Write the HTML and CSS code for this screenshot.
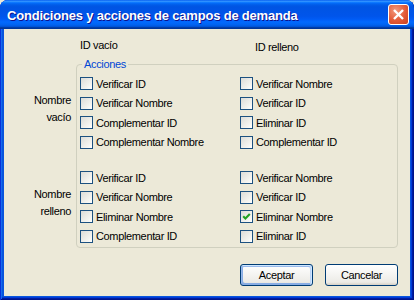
FILE: index.html
```html
<!DOCTYPE html>
<html lang="es">
<head>
    <meta charset="UTF-8">
    <meta name="viewport" content="width=device-width, initial-scale=1.0">
    <title>Condiciones y acciones de campos de demanda</title>
    <link rel="stylesheet" href="styles.css">
</head>
<body>
    <div class="window">
        <div class="titlebar">
            <span class="title">Condiciones y acciones de campos de demanda</span>
            <button class="close" aria-label="Cerrar">
                <svg width="19" height="19" viewBox="0 0 19 19">
                    <path d="M5 5 L14 14 M14 5 L5 14" stroke="#fff" stroke-width="2.4" fill="none"/>
                </svg>
            </button>
        </div>

        <div class="content">
            <div class="heads">
                <span class="head">ID vacío</span>
                <span class="head head-right">ID relleno</span>
            </div>

            <div class="matrix">
                <div class="side">
                    <div class="side-label"><span>Nombre<br>vacío</span></div>
                    <div class="side-label"><span>Nombre<br>relleno</span></div>
                </div>

                <fieldset class="actions">
                    <legend>Acciones</legend>

                    <!-- Nombre vacío -->
                    <div class="group">
                        <label class="check"><span class="box"></span>Verificar ID</label>
                        <label class="check"><span class="box"></span>Verificar Nombre</label>
                        <label class="check"><span class="box"></span>Verificar Nombre</label>
                        <label class="check"><span class="box"></span>Verificar ID</label>
                        <label class="check"><span class="box"></span>Complementar ID</label>
                        <label class="check"><span class="box"></span>Eliminar ID</label>
                        <label class="check"><span class="box"></span>Complementar Nombre</label>
                        <label class="check"><span class="box"></span>Complementar ID</label>
                    </div>

                    <!-- Nombre relleno -->
                    <div class="group">
                        <label class="check"><span class="box"></span>Verificar ID</label>
                        <label class="check"><span class="box"></span>Verificar Nombre</label>
                        <label class="check"><span class="box"></span>Verificar Nombre</label>
                        <label class="check"><span class="box"></span>Verificar ID</label>
                        <label class="check"><span class="box"></span>Eliminar Nombre</label>
                        <label class="check"><span class="box checked">
                            <svg width="11" height="11" viewBox="0 0 11 11">
                                <path d="M2.2 5.2 L4.4 7.4 L8.8 3" stroke="#21A121" stroke-width="2.1" fill="none"/>
                            </svg>
                        </span>Eliminar Nombre</label>
                        <label class="check"><span class="box"></span>Complementar ID</label>
                        <label class="check"><span class="box"></span>Eliminar ID</label>
                    </div>
                </fieldset>
            </div>

            <div class="buttons">
                <button class="btn btn-default">Aceptar</button>
                <button class="btn">Cancelar</button>
            </div>
        </div>
    </div>
</body>
</html>
```

FILE: styles.css
```css
html, body {
    margin: 0;
    padding: 0;
}

body {
    font-family: "Liberation Sans", Arial, sans-serif;
    font-size: 11px;
    color: #000;
    background-color: #ECE9D8;
}

.window {
    width: 414px;
    height: 300px;
    display: flex;
    flex-direction: column;
    background-color: #0855DD;
    border-radius: 8px 8px 0 0;
    box-shadow:
        inset 1px 0 0 #0831D9,
        inset -1px -1px 0 #00138C,
        inset 2px 0 0 #166AEE,
        inset -2px -2px 0 #001EA0,
        inset -3px -3px 0 #003BDA;
}

/* title bar */
.titlebar {
    height: 29px;
    flex: none;
    display: flex;
    align-items: center;
    justify-content: space-between;
    padding: 0 5px 0 7px;
    box-sizing: border-box;
    border-radius: 8px 8px 0 0;
    background: linear-gradient(180deg,
        #0058EE 0%, #3593FF 4%, #288EFF 6%, #127DFF 8%, #036FFC 10%,
        #0262EE 14%, #0057E5 20%, #0054E3 24%, #0055EB 56%, #005BF5 66%,
        #026AFE 76%, #0062EF 86%, #0052D6 92%, #0040AB 94%, #003092 100%);
}

.title {
    color: #fff;
    font-weight: bold;
    font-size: 13px;
    letter-spacing: -0.2px;
    text-shadow: 1px 1px #0F1089;
    margin-top: 1px;
}

.close {
    width: 21px;
    height: 21px;
    padding: 0;
    border: 1px solid #fff;
    border-radius: 3px;
    display: flex;
    align-items: center;
    justify-content: center;
    background: radial-gradient(circle at 35% 30%, #F29A7E 0%, #E35A37 55%, #C9411F 100%);
}

/* dialog body */
.content {
    flex: 1;
    margin: 0 4px 4px;
    padding: 10px 12px 0 0;
    background-color: #ECE9D8;
    letter-spacing: -0.35px;
}

.heads {
    display: flex;
    align-items: flex-start;
    padding-left: 76px;
    line-height: 13px;
}

.head {
    width: 175px;
    flex: none;
}

.head-right {
    width: auto;
    padding-top: 2px;
}

.matrix {
    display: flex;
    margin-top: 3px;
}

.side {
    width: 72px;
    flex: none;
    box-sizing: border-box;
    padding: 17px 5px 0 0;
    display: flex;
    flex-direction: column;
    gap: 16px;
    text-align: right;
    line-height: 17px;
}

.side-label {
    height: 78px;
    box-sizing: border-box;
    padding-bottom: 9px;
    display: flex;
    flex-direction: column;
    justify-content: center;
}

.actions {
    flex: 1;
    min-width: 0;
    margin: 0;
    padding: 3px 3px 1px;
    border: 1px solid #D0D0BF;
    border-radius: 4px;
}

.actions legend {
    margin-left: 2px;
    padding: 1px 2px 0;
    line-height: 13px;
    color: #0046D5;
}

.group {
    display: grid;
    grid-template-columns: 160px 1fr;
    grid-auto-rows: 19.5px;
}

.group + .group {
    margin-top: 16px;
}

.check {
    display: flex;
    align-items: center;
    gap: 3px;
    white-space: nowrap;
}

.box {
    width: 13px;
    height: 13px;
    flex: none;
    box-sizing: border-box;
    border: 1px solid #1C5180;
    background: linear-gradient(135deg, #DCDCD7 0%, #F4F4F0 70%, #fff 100%);
    display: flex;
    align-items: center;
    justify-content: center;
}

/* buttons */
.buttons {
    display: flex;
    justify-content: flex-end;
    gap: 12px;
    margin-top: 16px;
}

.btn {
    width: 73px;
    height: 22px;
    padding: 0;
    font: inherit;
    letter-spacing: inherit;
    color: #000;
    border: 1px solid #003C74;
    border-radius: 3px;
    background: linear-gradient(180deg, #fff 0%, #ECEBE6 86%, #D6D0C5 100%);
}

.btn-default {
    box-shadow:
        inset -1px 1px #CEE7FF,
        inset 1px 2px #98B8EA,
        inset -2px 2px #BCD4F6,
        inset 1px -1px #89ADE4,
        inset 2px -2px #89ADE4;
}
```
